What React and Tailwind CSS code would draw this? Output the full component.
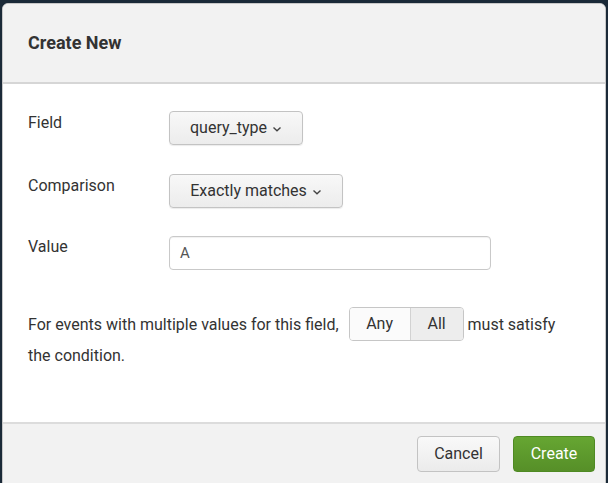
import React from "react";

function Caret() {
  return (
    <svg className="w-[10px] h-[10px] ml-[5px] mt-[1px]" viewBox="0 0 10 10" fill="none" stroke="#444" strokeWidth="1.4">
      <path d="M1.5 3.5 L5 6.8 L8.5 3.5" />
    </svg>
  );
}

function DropButton({ label, width }) {
  return (
    <button
      className={`flex items-center justify-center h-[34px] ${width} rounded-[4px] border border-[#c3c3c3] bg-gradient-to-b from-[#f8f8f8] to-[#ececec] text-[16px] text-[#333] shadow-[0_1px_1px_rgba(0,0,0,0.08)]`}
    >
      {label}
      <Caret />
    </button>
  );
}

export default function App() {
  return (
    <div className="w-[608px] h-[483px] bg-[#1b2a38] overflow-hidden pt-[3px] px-[2px]" style={{ fontFamily: "Roboto, 'Liberation Sans', sans-serif" }}>
      <div className="h-[490px] rounded-t-[6px] bg-white flex flex-col overflow-hidden border border-[#c8c8c8]">
        {/* Header */}
        <div className="h-[80px] shrink-0 bg-[#f2f2f2] border-b-2 border-[#d6d6d6] flex items-center pl-[25px]">
          <h1 className="text-[18px] font-bold text-[#333] mt-[-2px]">Create New</h1>
        </div>

        {/* Body */}
        <div className="h-[338px] shrink-0 pl-[25px] pt-[27px] text-[16px] text-[#333]">
          <div className="flex items-start">
            <span className="w-[141px]">Field</span>
            <DropButton label="query_type" width="w-[134px]" />
          </div>
          <div className="flex items-start mt-[29px]">
            <span className="w-[141px]">Comparison</span>
            <DropButton label="Exactly matches" width="w-[174px]" />
          </div>
          <div className="flex items-start mt-[28px]">
            <span className="w-[141px] mt-[-1px]">Value</span>
            <div className="w-[322px] h-[34px] rounded-[4px] border border-[#c9c9c9] bg-white flex items-center pl-[10px] text-[15px] text-[#555] shadow-[inset_0_1px_1px_rgba(0,0,0,0.06)]">
              A
            </div>
          </div>
          <div className="mt-[40px] pr-[36px] leading-[30px]">
            <span>For events with multiple values for this field,</span>
            <span className="inline-flex align-middle h-[34px] ml-[10px] mr-[4px] rounded-[4px] border border-[#c6c6c6] overflow-hidden mt-[-3px]">
              <span className="w-[61px] flex items-center justify-center bg-[#fbfbfb] border-r border-[#d2d2d2]">Any</span>
              <span className="w-[52px] flex items-center justify-center bg-[#ededed]">All</span>
            </span>
            <span>must satisfy the condition.</span>
          </div>
        </div>

        {/* Footer */}
        <div className="flex-1 bg-[#f2f2f2] border-t-2 border-[#dcdcdc] flex justify-end items-start pt-[12px] pr-[10px] gap-[13px]">
          <button className="w-[83px] h-[36px] rounded-[4px] border border-[#c3c3c3] bg-gradient-to-b from-[#f9f9f9] to-[#ebebeb] text-[16px] text-[#333]">
            Cancel
          </button>
          <button className="w-[82px] h-[36px] rounded-[4px] border border-[#4f8a23] bg-gradient-to-b from-[#66a632] to-[#568f28] text-[16px] text-white">
            Create
          </button>
        </div>
      </div>
    </div>
  );
}
